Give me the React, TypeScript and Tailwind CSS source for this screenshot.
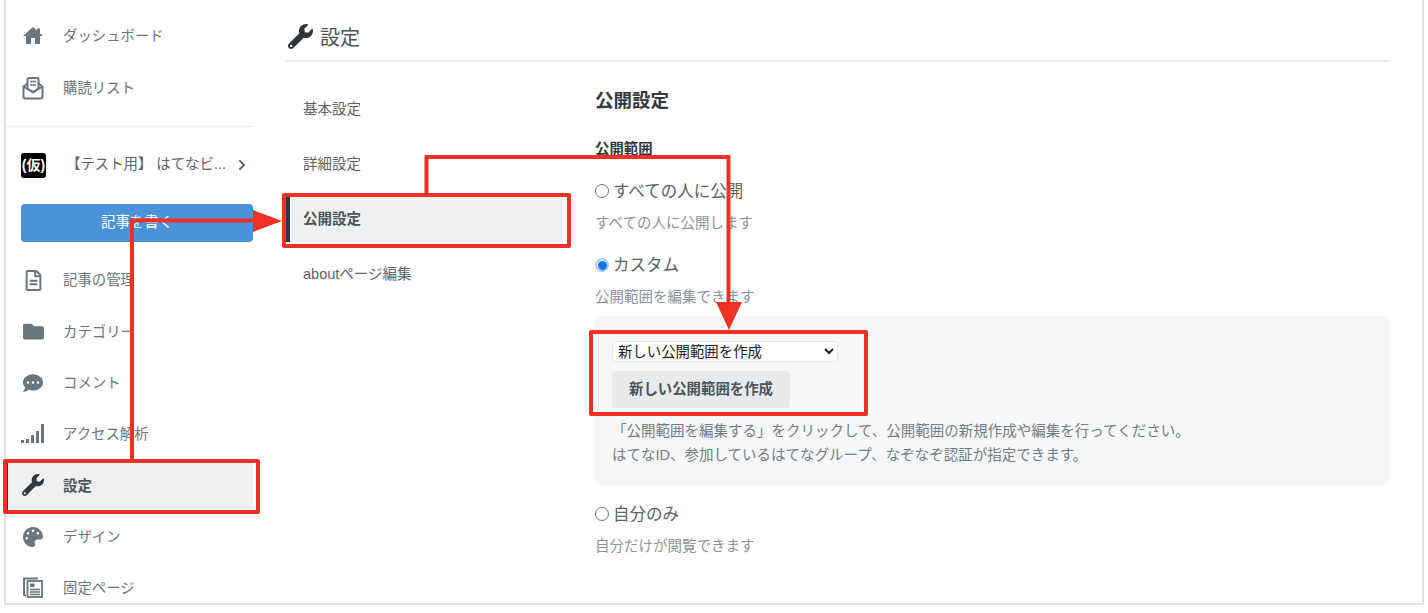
import React from 'react';
import { FaRegFileAlt, FaFolder, FaCommentDots, FaWrench, FaPalette, FaChevronRight } from 'react-icons/fa';

const font = { fontFamily: '"Liberation Sans", "Noto Sans CJK JP", sans-serif' };

const HomeIcon = () => (
  <svg width="26" height="26" viewBox="0 0 24 24" fill="currentColor">
    <path d="M10 20v-6h4v6h5v-8h3l-3-2.700V4.500h-3v2.100L12 3 2 12h3v8z" />
  </svg>
);

const SubscribeIcon = () => (
  <svg width="22" height="24" viewBox="0 0 22 24" fill="none" stroke="currentColor" strokeWidth="2" strokeLinejoin="round">
    <path d="M1.500 10.500v10a2 2 0 0 0 2 2h15a2 2 0 0 0 2-2v-10l-4-3" />
    <path d="M5.500 7.500v5l5.500 3.500 5.500-3.500v-9a1.500 1.500 0 0 0-1.500-1.500h-8a1.500 1.500 0 0 0-1.500 1.500z" />
    <path d="M5.500 7.500l-4 3 9.500 6 9.500-6" />
    <path d="M8 5.500h6M8 9h6" strokeWidth="1.600" />
  </svg>
);

const SignalIcon = () => (
  <svg width="24" height="20" viewBox="0 0 24 20" fill="currentColor">
    <rect x="0" y="16" width="3" height="3" />
    <rect x="5" y="15" width="3" height="4" />
    <rect x="10" y="11" width="3" height="8" />
    <rect x="15" y="7" width="3" height="12" />
    <rect x="20" y="0" width="3" height="19" />
  </svg>
);

const PagesIcon = () => (
  <svg width="20" height="21" viewBox="0 0 20 21" fill="none" stroke="currentColor">
    <path d="M3 18.500H2a1 1 0 0 1-1-1V1.500h14" strokeWidth="2" />
    <rect x="4.500" y="4" width="14.500" height="16" strokeWidth="1.800" />
    <rect x="7" y="6.500" width="4.500" height="3.500" fill="currentColor" stroke="none" />
    <path d="M7 12.500h10M7 15h10M7 17.500h10" strokeWidth="1.300" />
  </svg>
);

type SideItem = { label: string; icon: React.ReactNode; active?: boolean };

const topItems: SideItem[] = [
  { label: 'ダッシュボード', icon: <HomeIcon /> },
  { label: '購読リスト', icon: <SubscribeIcon /> },
];

const blogItems: SideItem[] = [
  { label: '記事の管理', icon: <FaRegFileAlt size={21} /> },
  { label: 'カテゴリー', icon: <FaFolder size={21} /> },
  { label: 'コメント', icon: <FaCommentDots size={20} /> },
  { label: 'アクセス解析', icon: <SignalIcon /> },
  { label: '設定', icon: <FaWrench size={22} className="text-[#33393c]" />, active: true },
  { label: 'デザイン', icon: <FaPalette size={20} /> },
  { label: '固定ページ', icon: <PagesIcon /> },
];

const SideRow = ({ item, height }: { item: SideItem; height: string }) => (
  <div
    className={`flex items-center ${height} ${
      item.active ? 'bg-[#eff0f2] border-l-2 border-[#33393c] pl-[13px] font-bold text-[#4a5459]' : 'pl-[15px] text-[#6a767c]'
    }`}
  >
    <span className="flex w-[24px] justify-center text-[#6a767c]">{item.icon}</span>
    <span className="ml-[18px] pt-[2px] text-[14.400px]">{item.label}</span>
  </div>
);

const subMenu = ['基本設定', '詳細設定', '公開設定', 'aboutページ編集'];

const Radio = ({ checked }: { checked?: boolean }) =>
  checked ? (
    <span className="flex h-[14px] w-[14px] items-center justify-center rounded-full border-2 border-[#a9ccf8] bg-white">
      <span className="h-[9px] w-[9px] rounded-full bg-[#1a73e8]" />
    </span>
  ) : (
    <span className="h-[14px] w-[14px] rounded-full border border-[#6b7175] bg-white" />
  );

const Choice = ({ label, desc, checked }: { label: string; desc: string; checked?: boolean }) => (
  <div>
    <div className="flex h-[24px] items-center gap-[4px] text-[16.500px] text-[#5b6468]">
      <Radio checked={checked} />
      <span>{label}</span>
    </div>
    <p className="mt-[8px] h-[24px] text-[14.500px] leading-[24px] text-[#8b9397]">{desc}</p>
  </div>
);

export default function App() {
  return (
    <div className="relative h-[613px] w-[1428px] overflow-hidden bg-white" style={font}>
      <div className="ml-[4px] flex h-[605px] w-[1420px] border-x-2 border-b-2 border-[#e2e2e2]">
        {/* left sidebar */}
        <aside className="w-[247px] shrink-0 pt-[10px]">
          {topItems.map((item) => (
            <SideRow key={item.label} item={item} height="h-[52px]" />
          ))}
          <div className="mt-[12px] h-px bg-[#e6ecef]" />
          <div className="mt-[25px] flex h-[26px] items-center pl-[15px]">
            <span className="flex h-[25px] w-[25px] items-center justify-center rounded-[3px] bg-black text-[14px] font-bold whitespace-nowrap text-white">
              (仮)
            </span>
            <span className="ml-[20px] text-[14.400px] whitespace-nowrap text-[#5b6468]">【テスト用】 はてなビ...</span>
            <FaChevronRight size={12} className="ml-[10px] text-[#5b6468]" />
          </div>
          <div className="mt-[26px] ml-[15px] flex h-[38px] w-[232px] items-center justify-center rounded-[4px] bg-[#4a93da] text-[14.400px] text-white">
            記事を書く
          </div>
          <div className="mt-[12.500px]">
            {blogItems.map((item) => (
              <SideRow key={item.label} item={item} height="h-[51.300px]" />
            ))}
          </div>
        </aside>

        {/* settings area */}
        <main className="ml-[33px] w-[1104px] shrink-0">
          <header className="flex h-[62px] items-center gap-[7px] border-b-2 border-[#e8eeee] pl-[2px] pt-[13px]">
            <FaWrench size={25} className="text-[#2f3437]" />
            <h1 className="pt-[2px] text-[20px] text-[#4a5459]">設定</h1>
          </header>
          <div className="flex">
            <nav className="w-[276px] shrink-0 pt-[20px]">
              {subMenu.map((label, i) => (
                <div
                  key={label}
                  className={`flex h-[55px] items-center text-[14.500px] ${
                    i === 2 ? 'font-bold text-[#4a5459]' : 'pl-[17px] text-[#5b6468]'
                  }`}
                >
                  {i === 2 ? (
                    <div className="flex h-[45px] w-full items-center rounded-r-[3px] border-l-4 border-[#33393c] bg-[#eff0f2] pl-[13px]">
                      {label}
                    </div>
                  ) : (
                    label
                  )}
                </div>
              ))}
            </nav>
            <section className="ml-[33px] w-[795px] pt-[27px]">
              <h2 className="h-[24px] text-[18.500px] leading-[24px] font-bold text-[#33393c]">公開設定</h2>
              <h3 className="mt-[26px] h-[20px] text-[14.400px] leading-[20px] font-bold text-[#33393c]">公開範囲</h3>
              <div className="mt-[20px]">
                <Choice label="すべての人に公開" desc="すべての人に公開します" />
              </div>
              <div className="mt-[18px]">
                <Choice label="カスタム" desc="公開範囲を編集できます" checked />
              </div>
              <div className="mt-[7px] h-[169px] rounded-[8px] bg-[#f6f7f9] pl-[17px] pt-[25px]">
                <select
                  defaultValue="new"
                  className="block h-[21px] w-[226px] rounded-[4px] border border-[#e4e6e8] bg-white pl-[1px] text-[14.400px] text-[#222]"
                >
                  <option value="new">新しい公開範囲を作成</option>
                </select>
                <button className="mt-[9px] block h-[37px] w-[178px] rounded-[4px] bg-[#e9eaec] text-[14.400px] font-bold text-[#4a5459]">
                  新しい公開範囲を作成
                </button>
                <p className="mt-[11px] text-[14.500px] leading-[24px] text-[#737c81]">
                  「公開範囲を編集する」をクリックして、公開範囲の新規作成や編集を行ってください。
                  <br />
                  はてなID、参加しているはてなグループ、なぞなぞ認証が指定できます。
                </p>
              </div>
              <div className="mt-[17px]">
                <Choice label="自分のみ" desc="自分だけが閲覧できます" />
              </div>
            </section>
          </div>
        </main>
      </div>

      {/* red annotations drawn over the page */}
      <div className="absolute top-[459px] left-[3px] h-[55px] w-[257px] rounded-[2px] border-4 border-[#ee3124]" />
      <div className="absolute top-[193px] left-[282px] h-[55px] w-[289px] rounded-[2px] border-4 border-[#ee3124]" />
      <div className="absolute top-[330px] left-[589px] h-[86px] w-[279px] rounded-[2px] border-4 border-[#ee3124]" />
      <svg className="absolute top-0 left-0" width="1428" height="613" fill="none">
        <path d="M132 460V220.500H256" stroke="#ee3124" strokeWidth="4" />
        <path d="M253 210L282 221L253 232Z" fill="#ee3124" />
        <path d="M426.500 194V157H728.500V306" stroke="#ee3124" strokeWidth="4" />
        <path d="M716 302L742 302L729 330Z" fill="#ee3124" />
      </svg>
    </div>
  );
}
